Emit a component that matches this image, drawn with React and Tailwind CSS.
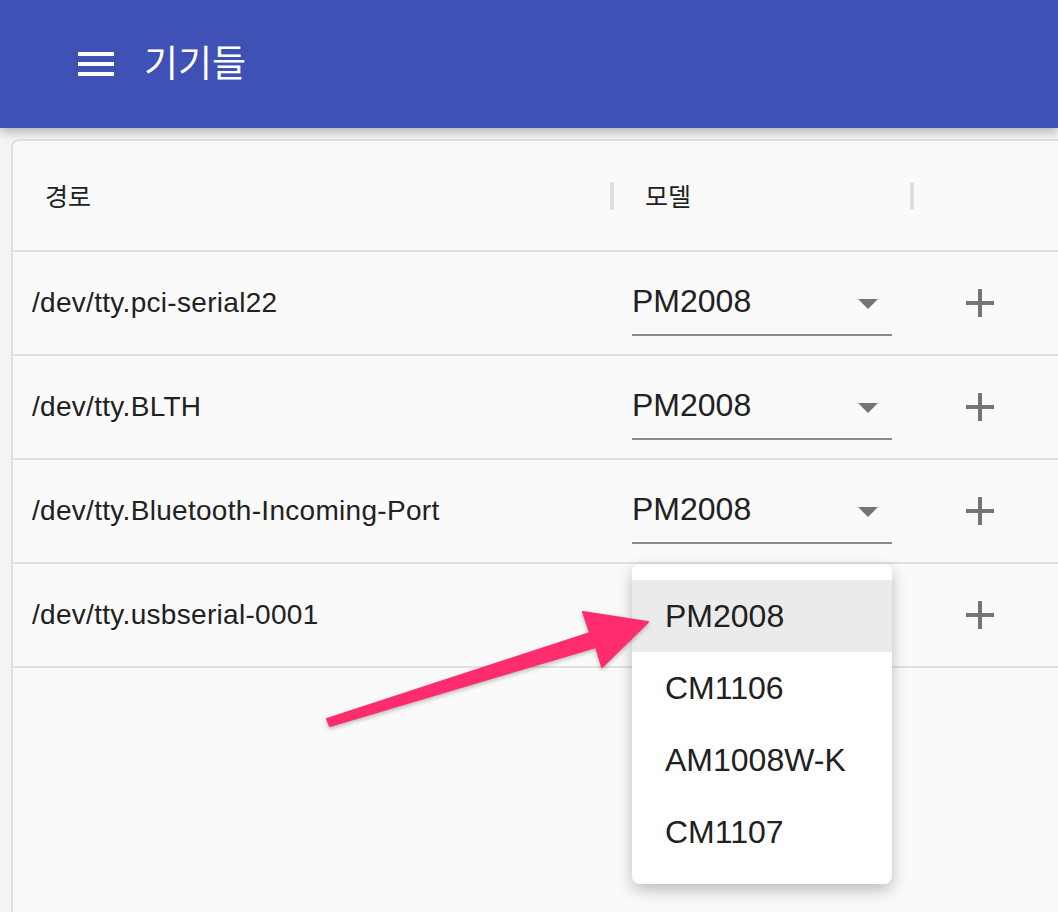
import React from "react";

const rows = [
    { path: "/dev/tty.pci-serial22", model: "PM2008" },
    { path: "/dev/tty.BLTH", model: "PM2008" },
    { path: "/dev/tty.Bluetooth-Incoming-Port", model: "PM2008" },
    { path: "/dev/tty.usbserial-0001", model: "PM2008", open: true },
];

const options = ["PM2008", "CM1106", "AM1008W-K", "CM1107"];

const latin = { fontFamily: '"Liberation Sans", Arial, "Noto Sans CJK KR", sans-serif' };
const korean = { fontFamily: '"Noto Sans CJK KR", "Liberation Sans", sans-serif' };

const Plus = () => (
    <svg width="28" height="28" viewBox="0 0 28 28">
        <rect x="12" y="0" width="4" height="28" fill="#757575" />
        <rect x="0" y="12" width="28" height="4" fill="#757575" />
    </svg>
);

const Select = ({ value, hidden }) => (
    <div className={"w-[260px] h-[66px] pb-[2px] border-b-2 border-[#8c8c8c] flex items-center justify-between pr-[14px] " + (hidden ? "invisible" : "")}>
        <span className="text-[32px] text-[#212121]" style={latin}>{value}</span>
        <svg width="20" height="10" viewBox="0 0 20 10" className="mt-[6px]">
            <path d="M0 0 L20 0 L10 10 Z" fill="#757575" />
        </svg>
    </div>
);

const App = () => {
    return (
        <div className="relative w-[1058px] h-[912px] overflow-hidden bg-[#f5f5f5]">
            {/* App bar */}
            <header className="relative z-10 h-[128px] bg-[#3f51b5] flex items-center pl-[78px] shadow-[0_4px_10px_rgba(0,0,0,0.28)]">
                <div className="flex flex-col gap-[6px] mt-[-1px]">
                    <span className="block w-[36px] h-[4px] bg-white" />
                    <span className="block w-[36px] h-[4px] bg-white" />
                    <span className="block w-[36px] h-[4px] bg-white" />
                </div>
                <h1 className="ml-[30px] text-[37px] text-white mt-[-4px]" style={korean}>기기들</h1>
            </header>

            {/* Card */}
            <div className="pl-[11px] pt-[11px]">
                <div className="w-[1060px] h-[800px] bg-[#fafafa] border-l-2 border-t-2 border-[#e0e0e0] rounded-tl-lg">
                    <div className="grid grid-cols-[597px_300px_1fr] h-[111px] border-b-2 border-[#e0e0e0] items-center">
                        <div className="pl-[32px] text-[25px] text-[#212121]" style={korean}>경로</div>
                        <div className="flex items-center">
                            <span className="block w-[4px] h-[28px] bg-[#e0e0e0]" />
                            <span className="ml-[31px] text-[25px] text-[#212121]" style={korean}>모델</span>
                        </div>
                        <div className="flex items-center">
                            <span className="block w-[4px] h-[28px] bg-[#e0e0e0]" />
                        </div>
                    </div>

                    {rows.map((row) => (
                        <div key={row.path} className="grid grid-cols-[597px_300px_1fr] h-[104px] border-b-2 border-[#e0e0e0] items-center">
                            <div className="pl-[19px] text-[28px] tracking-[0.3px] text-[#212121]" style={latin}>{row.path}</div>
                            <div className="pl-[22px]">
                                <Select value={row.model} hidden={row.open} />
                            </div>
                            <div className="pl-[56px] flex items-center">
                                <Plus />
                            </div>
                        </div>
                    ))}
                </div>
            </div>

            {/* Open menu */}
            <div className="absolute z-20 left-[632px] top-[564px] w-[260px] py-[16px] bg-white rounded-lg shadow-[0_6px_16px_rgba(0,0,0,0.25)]">
                {options.map((opt, i) => (
                    <div
                        key={opt}
                        className={"h-[72px] flex items-center pl-[33px] text-[32px] text-[#212121] " + (i === 0 ? "bg-[#ebebeb]" : "")}
                        style={latin}
                    >
                        {opt}
                    </div>
                ))}
            </div>

            {/* Annotation arrow */}
            <svg className="absolute z-30 left-0 top-0 pointer-events-none drop-shadow-[0_2px_2px_rgba(0,0,0,0.25)]" width="1058" height="912">
                <path
                    d="M327 719 L590 633 L583 612 L648 622 L602 667 L596 647 L330 726 Z"
                    fill="#ff2d6d"
                    stroke="#ff2d6d"
                    strokeWidth="2"
                    strokeLinejoin="round"
                />
            </svg>
        </div>
    );
};

export default App;
